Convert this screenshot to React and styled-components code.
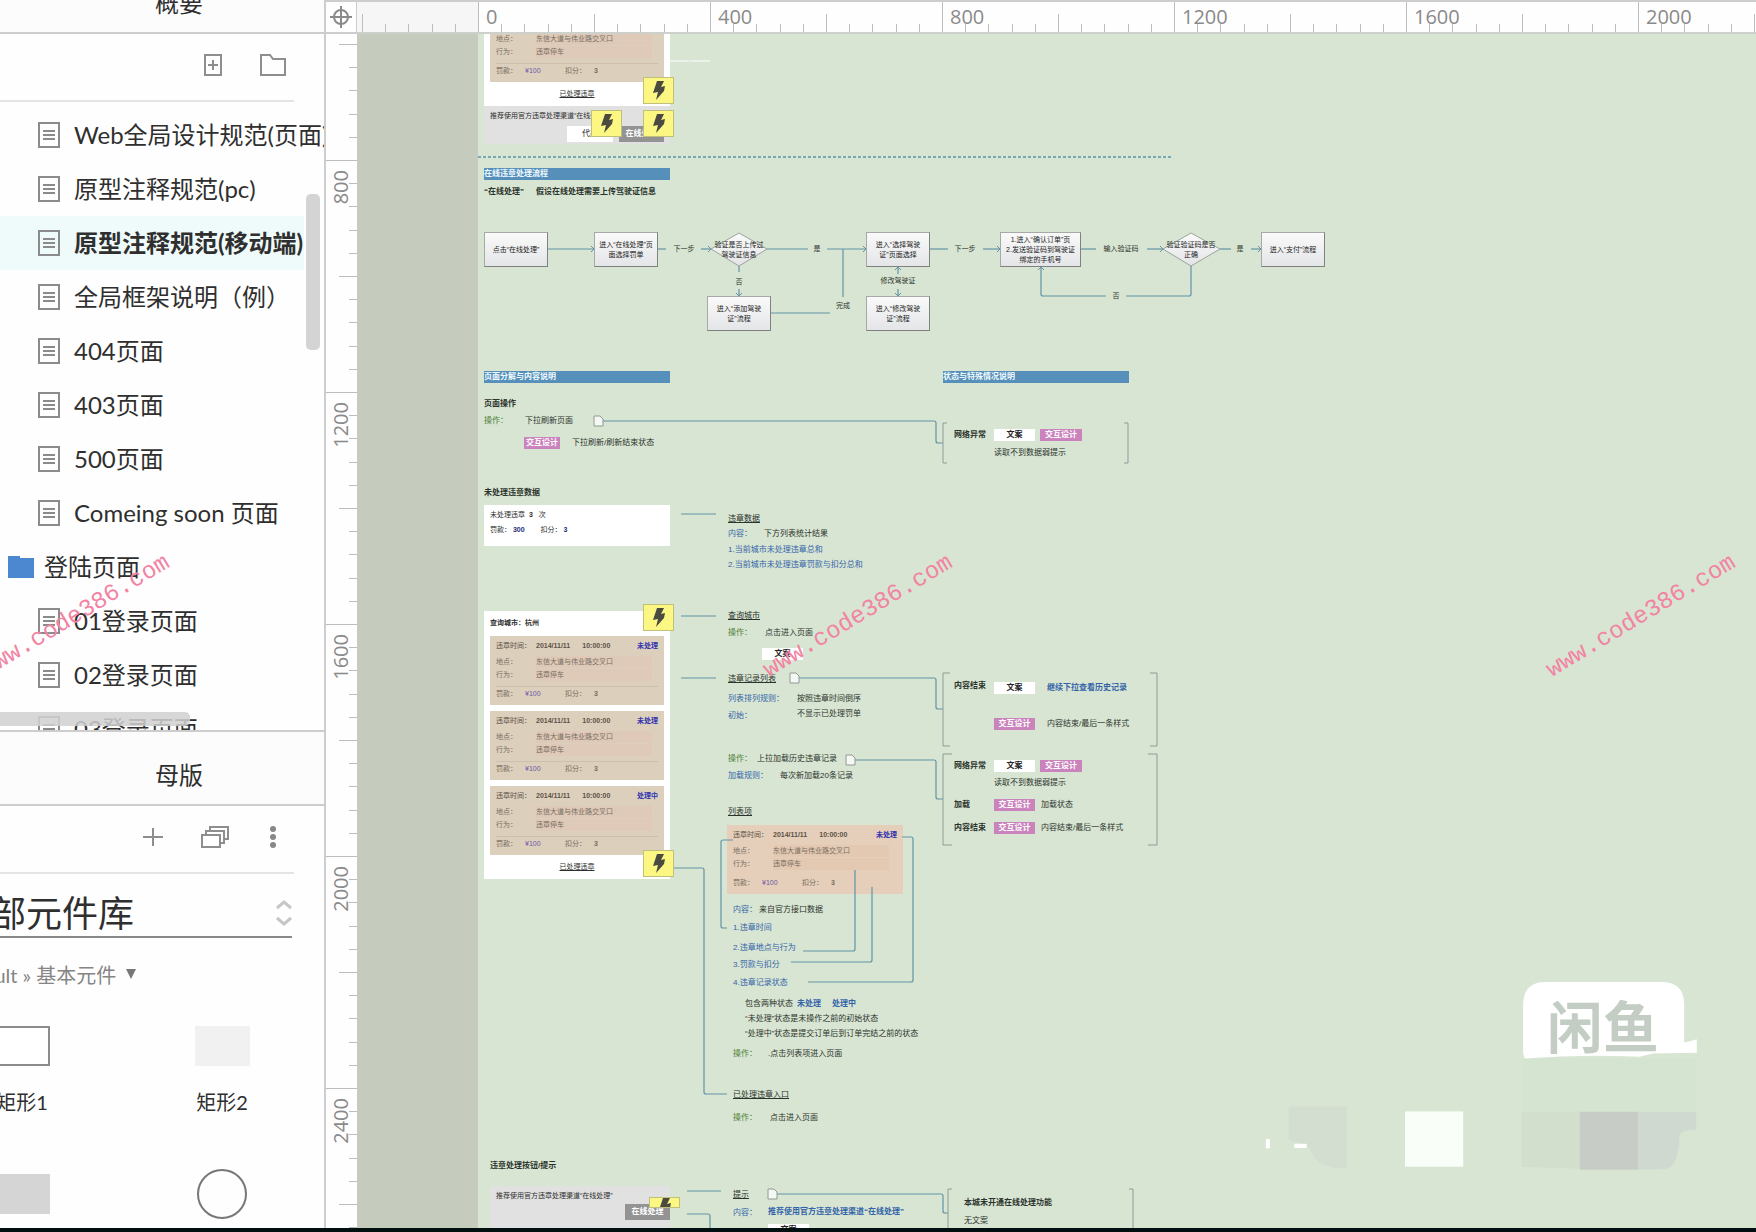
import React from "react";
import styled, { createGlobalStyle, css } from "styled-components";

const pages = [
  { name: "Web全局设计规范(页面)" },
  { name: "原型注释规范(pc)" },
  { name: "原型注释规范(移动端)", active: true },
  { name: "全局框架说明（例）" },
  { name: "404页面" },
  { name: "403页面" },
  { name: "500页面" },
  { name: "Comeing soon 页面" },
  { name: "登陆页面", folder: true },
  { name: "01登录页面" },
  { name: "02登录页面" },
  { name: "03登录页面" },
];

const notes = [
  // online handling flow
  { x: 6, y: 158, text: "“在线处理”", bold: true },
  { x: 58, y: 158, text: "假设在线处理需要上传驾驶证信息", bold: true },
  // page operations
  { x: 6, y: 370, text: "页面操作", bold: true },
  { x: 6, y: 387, text: "操作：", tone: "green" },
  { x: 47, y: 387, text: "下拉刷新页面" },
  { x: 94, y: 409, text: "下拉刷新/刷新结束状态" },
  { x: 476, y: 401, text: "网络异常", bold: true },
  { x: 516, y: 419, text: "读取不到数据弱提示" },
  // violation data
  { x: 6, y: 459, text: "未处理违章数据", bold: true },
  { x: 250, y: 485, text: "违章数据", line: true },
  { x: 250, y: 500, text: "内容：", tone: "blue" },
  { x: 286, y: 500, text: "下方列表统计结果" },
  { x: 250, y: 516, text: "1.当前城市未处理违章总和", tone: "blue" },
  { x: 250, y: 531, text: "2.当前城市未处理违章罚款与扣分总和", tone: "blue" },
  // city
  { x: 250, y: 582, text: "查询城市", line: true },
  { x: 250, y: 599, text: "操作：", tone: "green" },
  { x: 287, y: 599, text: "点击进入页面" },
  // record list
  { x: 250, y: 645, text: "违章记录列表", line: true },
  { x: 250, y: 665, text: "列表排列规则：", tone: "blue" },
  { x: 319, y: 665, text: "按照违章时间倒序" },
  { x: 250, y: 682, text: "初始：", tone: "blue" },
  { x: 319, y: 680, text: "不显示已处理罚单" },
  { x: 476, y: 652, text: "内容结束", bold: true },
  { x: 569, y: 654, text: "继续下拉查看历史记录", tone: "blue", bold: true },
  { x: 569, y: 690, text: "内容结束/最后一条样式" },
  { x: 250, y: 725, text: "操作：", tone: "green" },
  { x: 279, y: 725, text: "上拉加载历史违章记录" },
  { x: 250, y: 742, text: "加载规则：", tone: "blue" },
  { x: 302, y: 742, text: "每次新加载20条记录" },
  { x: 476, y: 732, text: "网络异常", bold: true },
  { x: 516, y: 749, text: "读取不到数据弱提示" },
  { x: 476, y: 771, text: "加载", bold: true },
  { x: 563, y: 771, text: "加载状态" },
  { x: 476, y: 794, text: "内容结束", bold: true },
  { x: 563, y: 794, text: "内容结束/最后一条样式" },
  // list item
  { x: 250, y: 778, text: "列表项", line: true },
  { x: 255, y: 876, text: "内容：", tone: "blue" },
  { x: 281, y: 876, text: "来自官方接口数据" },
  { x: 255, y: 894, text: "1.违章时间", tone: "blue" },
  { x: 255, y: 914, text: "2.违章地点与行为", tone: "blue" },
  { x: 255, y: 931, text: "3.罚款与扣分", tone: "blue" },
  { x: 255, y: 949, text: "4.违章记录状态", tone: "blue" },
  { x: 267, y: 970, text: "包含两种状态" },
  { x: 319, y: 970, text: "未处理", tone: "blue", bold: true },
  { x: 354, y: 970, text: "处理中", tone: "blue", bold: true },
  { x: 267, y: 985, text: "“未处理”状态是未操作之前的初始状态" },
  { x: 267, y: 1000, text: "“处理中”状态是提交订单后到订单完结之前的状态" },
  { x: 255, y: 1020, text: "操作：", tone: "green" },
  { x: 290, y: 1020, text: ".点击列表项进入页面" },
  { x: 255, y: 1061, text: "已处理违章入口", line: true },
  { x: 255, y: 1084, text: "操作：", tone: "green" },
  { x: 292, y: 1084, text: "点击进入页面" },
  // buttons and hints
  { x: 12, y: 1132, text: "违章处理按钮/提示", bold: true },
  { x: 255, y: 1161, text: "提示", line: true },
  { x: 255, y: 1179, text: "内容：", tone: "blue" },
  { x: 290, y: 1178, text: "推荐使用官方违章处理渠道“在线处理”", tone: "blue", bold: true },
  { x: 486, y: 1169, text: "本城未开通在线处理功能", bold: true },
  { x: 486, y: 1187, text: "无文案" },
];

const tags = [
  { x: 46, y: 403, w: 36, pink: true },
  { x: 516, y: 395, w: 41 },
  { x: 562, y: 395, w: 42, pink: true },
  { x: 284, y: 614, w: 41 },
  { x: 516, y: 648, w: 41 },
  { x: 516, y: 684, w: 41, pink: true },
  { x: 516, y: 726, w: 41 },
  { x: 562, y: 726, w: 42, pink: true },
  { x: 516, y: 765, w: 41, pink: true },
  { x: 516, y: 788, w: 41, pink: true },
  { x: 290, y: 1190, w: 41 },
];

const bars = [
  { x: 6, y: 134, text: "在线违章处理流程" },
  { x: 6, y: 337, text: "页面分解与内容说明" },
  { x: 465, y: 337, text: "状态与特殊情况说明" },
];

const nodes = [
  { x: 6, y: 198, w: 64, lines: ["点击“在线处理”"] },
  { x: 116, y: 198, w: 64, lines: ["进入“在线处理”页", "面选择罚单"] },
  { x: 229, y: 262, w: 64, lines: ["进入“添加驾驶", "证”流程"] },
  { x: 388, y: 198, w: 64, lines: ["进入“选择驾驶", "证”页面选择"] },
  { x: 388, y: 262, w: 64, lines: ["进入“修改驾驶", "证”流程"] },
  { x: 522, y: 198, w: 81, lines: ["1.进入“确认订单”页", "2.发送验证码到驾驶证", "绑定的手机号"] },
  { x: 783, y: 198, w: 64, lines: ["进入“支付”流程"] },
  { x: 229, y: 198, w: 64, plain: true, lines: ["验证是否上传过", "驾驶证信息"] },
  { x: 681, y: 198, w: 64, plain: true, lines: ["验证验证码是否", "正确"] },
];

const steps = [
  { x: 206, y: 215, text: "下一步" },
  { x: 339, y: 215, text: "是" },
  { x: 261, y: 248, text: "否" },
  { x: 365, y: 272, text: "完成" },
  { x: 420, y: 247, text: "修改驾驶证" },
  { x: 487, y: 215, text: "下一步" },
  { x: 643, y: 215, text: "输入验证码" },
  { x: 762, y: 215, text: "是" },
  { x: 638, y: 262, text: "否" },
];

const arrows = [
  "M70 215H116",
  "M223 215H233",
  "M349 215H388",
  "M261 255V262",
  "M420 240V233",
  "M420 255V262",
  "M505 215H522",
  "M669 215H685",
  "M773 215H783",
  "M628 262H565Q563 262 563 260V233",
];

const wires = [
  "M180 215H188",
  "M289 215H330",
  "M365 215V263",
  "M293 279H352",
  "M261 232V238",
  "M452 215H470",
  "M603 215H618",
  "M742 215H753",
  "M713 232V260Q713 262 711 262H648",
  "M125 387H456Q458 387 458 389V407Q458 409 460 409H465",
  "M203 480H238",
  "M203 582H238",
  "M203 644H238",
  "M321 644H456Q458 644 458 646V673Q458 675 460 675H465",
  "M377 726H456Q458 726 458 728V763Q458 765 460 765H465",
  "M255 806H245Q243 806 243 808V892Q243 894 245 894H249",
  "M424 803H433Q435 803 435 805V946Q435 948 433 948H330",
  "M377 836V915Q377 917 375 917H325",
  "M394 853V926Q394 928 392 928H313",
  "M196 834H224Q226 834 226 836V1058Q226 1060 228 1060H249",
  "M209 1157H243",
  "M298 1160H463Q465 1160 465 1162V1177Q465 1179 467 1179H470",
  "M209 1180H230Q232 1180 232 1182V1200",
];

const brackets = [
  "M469 389H465V429H469M646 389H650V429H646",
  "M472 639H465V712H472M672 639H679V712H672",
  "M474 720H465V811H474M670 720H679V811H670",
  "M474 1155H470V1200M651 1155H655V1200",
];

const sheets = [
  [116, 382],
  [312, 639],
  [368, 721],
  [290, 1155],
];

const bolts = [
  [165, 43],
  [113, 76],
  [165, 76],
  [165, 570],
  [165, 816],
];

function Ruler({ vertical, start, count }) {
  const ticks = (n, first) =>
    Array.from({ length: n }, (_, i) => <Tick key={i} $v={vertical} $kind={(i + first) % 10} />);
  return (
    <RulerStrip $v={vertical}>
      <Segment $v={vertical} $half>{ticks(5, 5)}</Segment>
      {Array.from({ length: count }, (_, i) => (
        <Segment key={i} $v={vertical}>
          {ticks(10, 0)}
          <RulerLabel $v={vertical}>{start + i * 400}</RulerLabel>
        </Segment>
      ))}
    </RulerStrip>
  );
}

function DocIcon() {
  return (
    <svg width="22" height="26" viewBox="0 0 22 26" fill="none" stroke="#8b8b8b" strokeWidth="2">
      <path d="M1 1H21V25H1ZM5 9H17M5 13H17M5 17H17" />
    </svg>
  );
}

function FolderIcon() {
  return (
    <svg width="26" height="22" viewBox="0 0 26 22">
      <path d="M0 0H12V2H26V22H0Z" fill="#4c88d0" />
    </svg>
  );
}

function Bolt({ x, y, h = 27 }) {
  return (
    <BoltBox $x={x} $y={y} $h={h}>
      <svg width="14" height="19" viewBox="0 0 14 19">
        <path d="M5 0H12L9 6L13 5L12 10L4 19L6 11L1 12Z" fill="#4a4a40" />
      </svg>
    </BoltBox>
  );
}

function Violation({ status = "未处理", warm }) {
  return (
    <Card $warm={warm}>
      <CardHead>
        <Label>违章时间：</Label>
        <b>2014/11/11</b>
        <Time>10:00:00</Time>
        <Status>{status}</Status>
      </CardHead>
      <CardRow>
        <Label>地点：</Label>
        <Value $warm={warm}>东信大道与伟业路交叉口</Value>
      </CardRow>
      <CardRow>
        <Label>行为：</Label>
        <Value $warm={warm}>违章停车</Value>
      </CardRow>
      <CardFoot $warm={warm}>
        <Fine>罚款：</Fine>
        <Price>¥100</Price>
        <Fine>扣分：</Fine>
        <b>3</b>
      </CardFoot>
    </Card>
  );
}

function Connectors() {
  return (
    <Drawing width="900" height="1200" viewBox="0 0 900 1200" fill="none">
      <defs>
        <marker
          id="arrow"
          viewBox="0 0 8 8"
          refX="6"
          refY="4"
          markerWidth="8"
          markerHeight="8"
          markerUnits="userSpaceOnUse"
          orient="auto-start-reverse"
        >
          <path d="M3 1L6 4L3 7" fill="none" stroke="#6393a6" />
        </marker>
        <linearGradient id="shade" x1="0" y1="0" x2="0" y2="1">
          <stop offset="0" stopColor="#fbfbfb" />
          <stop offset="1" stopColor="#e3e4e6" />
        </linearGradient>
      </defs>
      <path d="M191 27H233" stroke="#fff" strokeDasharray="20 1" />
      <path d="M0 123H695" stroke="#76a9b4" strokeWidth="2" strokeDasharray="3 2" />
      <path d="M261 199L289 215L261 232L233 215ZM713 199L742 215L713 232L685 215Z" fill="url(#shade)" stroke="#9aa39c" />
      {wires.map((d) => <path key={d} d={d} stroke="#6393a6" strokeWidth="1.2" />)}
      {arrows.map((d) => <path key={d} d={d} stroke="#6393a6" strokeWidth="1.2" markerEnd="url(#arrow)" />)}
      {brackets.map((d) => <path key={d} d={d} stroke="#8a9d98" />)}
      {sheets.map(([x, y]) => (
        <path key={y} d={`M${x} ${y}H${x + 6}L${x + 9} ${y + 3}V${y + 10}H${x}Z`} fill="#f4f7f3" stroke="#8f9a93" />
      ))}
    </Drawing>
  );
}

function Stamp() {
  return (
    <StampBox viewBox="60 90 1330 580" width="443" height="193">
      <rect x="850" y="326" width="520" height="160" fill="#d4e4d1" />
      <path d="M145 470H320V655H290Q235 650 215 610L205 590L145 570Z" fill="#d3ddd0" />
      <rect x="495" y="485" width="175" height="166" fill="#f9fff8" />
      <path d="M845 486H1020V657L845 652Z" fill="#d2dfcd" />
      <rect x="1020" y="486" width="175" height="174" fill="#c7ccc6" />
      <path d="M1195 486H1370V540Q1322 540 1320 560Q1318 658 1270 659L1195 660Z" fill="#d0d9d0" />
      <rect x="77" y="568" width="12" height="28" fill="#fff" />
      <rect x="162" y="582" width="38" height="13" rx="4" fill="#fff" />
      <path d="M850 160Q852 98 915 96H1270Q1332 98 1334 160V278Q1355 274 1372 268V309L1240 311L1200 321Q1030 312 855 326L850 310Z" fill="#fff" />
      <text x="922" y="294" fill="#c3cdc3" fontSize="168" fontWeight="700" fontFamily="'Noto Sans CJK SC', sans-serif">闲鱼</text>
    </StampBox>
  );
}

function Sidebar() {
  return (
    <Side>
      <TabBar>
        <TabOn aria-label="页面" />
        <Tab>概要</Tab>
      </TabBar>
      <Tools>
        <IconButton aria-label="新增页面">
          <svg width="18" height="22" viewBox="0 0 18 22" fill="none" stroke="#8e8e8e" strokeWidth="2">
            <path d="M1 1H17V21H1ZM9 6V16M4 11H14" />
          </svg>
        </IconButton>
        <IconButton aria-label="新增文件夹">
          <svg width="26" height="22" viewBox="0 0 26 22" fill="none" stroke="#8e8e8e" strokeWidth="2">
            <path d="M1 1H10L13 5H25V21H1Z" />
          </svg>
        </IconButton>
      </Tools>
      <PageList>
        {pages.map((p) => (
          <PageLink href="#" key={p.name} $active={p.active} $folder={p.folder}>
            {p.folder ? <FolderIcon /> : <DocIcon />}
            <span>{p.name}</span>
          </PageLink>
        ))}
        <ThumbY />
        <ThumbX />
      </PageList>
      <TabBar $full>
        <TabOn aria-label="元件库" />
        <Tab>母版</Tab>
      </TabBar>
      <Tools $wide>
        <IconButton aria-label="添加">
          <svg width="20" height="20" viewBox="0 0 20 20" stroke="#8e8e8e" strokeWidth="2">
            <path d="M10 1V19M0 10H20" />
          </svg>
        </IconButton>
        <IconButton aria-label="元件库列表">
          <svg width="28" height="22" viewBox="0 0 28 22" fill="#fff" stroke="#8e8e8e" strokeWidth="2">
            <path d="M9 1H27V13H9Z" />
            <path d="M5 5H23V17H5Z" />
            <path d="M1 9H19V21H1Z" />
          </svg>
        </IconButton>
        <IconButton aria-label="更多">
          <svg width="12" height="22" viewBox="0 0 12 22" fill="#888">
            <circle cx="6" cy="3" r="3" />
            <circle cx="6" cy="11" r="3" />
            <circle cx="6" cy="19" r="3" />
          </svg>
        </IconButton>
      </Tools>
      <Library>
        <Picker>
          <LibrarySelect aria-label="元件库">
            <option>全部元件库</option>
          </LibrarySelect>
          <svg width="16" height="26" viewBox="0 0 16 26" fill="none" stroke="#c6c6c6" strokeWidth="3">
            <path d="M1 8L8 2L15 8M1 18L8 24L15 18" />
          </svg>
        </Picker>
        <Crumb>
          Default » 基本元件
          <svg width="10" height="10" viewBox="0 0 10 10">
            <path d="M0 0H10L5 10Z" fill="#777" />
          </svg>
        </Crumb>
        <Widgets>
          <Widget><Shape $border="2px solid #8c8c8c" />矩形1</Widget>
          <Widget><Shape $fill="#f1f1f1" />矩形2</Widget>
          <Widget><Shape $fill="#d5d5d5" /></Widget>
          <Widget><Circle /></Widget>
        </Widgets>
      </Library>
    </Side>
  );
}

function Board() {
  return (
    <Sheet>
      <Phone $x={6} $y={-21}>
        <Violation />
        <PhoneLink href="#">已处理违章</PhoneLink>
      </Phone>
      <Tip $x={6} $y={72} $w={186} $h={38}>
        推荐使用官方违章处理渠道“在线处理”
        <TipActions>
          <TipButton $w={46}>代办</TipButton>
          <TipButton $w={45} $dark>在线处理</TipButton>
        </TipActions>
      </Tip>

      <Stats>
        <p>未处理违章 &nbsp;<b>3</b> &nbsp; 次</p>
        <p>罚款： <strong>300</strong> <span>扣分： </span><strong>3</strong></p>
      </Stats>

      <Phone $x={6} $y={577}>
        <City>查询城市：杭州</City>
        <Violation />
        <Violation />
        <Violation status="处理中" />
        <PhoneLink href="#">已处理违章</PhoneLink>
      </Phone>

      <Sample>
        <Violation warm />
      </Sample>

      <Tip $x={12} $y={1152} $w={180} $h={44}>
        推荐使用官方违章处理渠道“在线处理”
        <TipActions $end>
          <TipButton $w={45} $dark>在线处理</TipButton>
        </TipActions>
      </Tip>

      {bars.map((b) => <Bar key={b.text} $x={b.x} $y={b.y}>{b.text}</Bar>)}
      {nodes.filter((n) => !n.plain).map((n) => (
        <Node key={n.lines[0] + n.x} $x={n.x} $y={n.y} $w={n.w}>
          {n.lines.map((l) => <span key={l}>{l}</span>)}
        </Node>
      ))}
      <Connectors />
      {nodes.filter((n) => n.plain).map((n) => (
        <Node key={n.x} $x={n.x} $y={n.y} $w={n.w} $plain>
          {n.lines.map((l) => <span key={l}>{l}</span>)}
        </Node>
      ))}
      {steps.map((s) => <Step key={s.x + s.text} $x={s.x} $y={s.y}>{s.text}</Step>)}
      {tags.map((t) => (
        <Tag key={`${t.x}-${t.y}`} $x={t.x} $y={t.y} $w={t.w} $pink={t.pink}>
          {t.pink ? "交互设计" : "文案"}
        </Tag>
      ))}
      {notes.map((n) => (
        <Note key={`${n.x}-${n.y}`} $x={n.x} $y={n.y} $tone={n.tone} $bold={n.bold} $line={n.line}>
          {n.text}
        </Note>
      ))}
      {bolts.map(([x, y]) => <Bolt key={`${x}-${y}`} x={x} y={y} />)}
      <Bolt x={171} y={1163} h={11} />
      <Stamp />
    </Sheet>
  );
}

export default function App() {
  return (
    <Screen>
      <GlobalStyle />
      <Main>
        <Sidebar />
        <Workspace>
          <Corner>
            <svg width="22" height="22" viewBox="0 0 22 22" fill="none" stroke="#8a8a8a" strokeWidth="2">
              <circle cx="11" cy="11" r="7" />
              <path d="M11 0V22M0 11H22" />
            </svg>
          </Corner>
          <Ruler start={0} count={6} />
          <Ruler vertical start={800} count={5} />
          <Canvas>
            <Board />
          </Canvas>
        </Workspace>
      </Main>
      <Footer />
      <Mark $x={-33}>www.code386.com</Mark>
      <Mark $x={750}>www.code386.com</Mark>
      <Mark $x={1533}>www.code386.com</Mark>
    </Screen>
  );
}

const GlobalStyle = createGlobalStyle`
  * {
    box-sizing: border-box;
  }
  body {
    margin: 0;
    font-family: Lato, "Noto Sans CJK SC", sans-serif;
    color: #2f2f2f;
  }
  p {
    margin: 0;
  }
  button, select {
    font: inherit;
    color: inherit;
    border: 0;
    padding: 0;
    background: none;
  }
  a {
    color: inherit;
  }
`;

const Screen = styled.div`
  position: relative;
  display: flex;
  flex-direction: column;
  height: 100vh;
  overflow: hidden;
`;

const Main = styled.div`
  flex: 1;
  min-height: 0;
  display: flex;
`;

const Footer = styled.div`
  height: 4px;
  background: #020f10;
`;

/* sidebar */

const Side = styled.aside`
  width: 326px;
  flex-shrink: 0;
  display: flex;
  flex-direction: column;
  overflow: hidden;
  background: #fefefe;
  border-right: 2px solid #cdcdcd;
`;

const TabBar = styled.div`
  display: flex;
  align-items: flex-end;
  flex-shrink: 0;
  height: ${(p) => (p.$full ? "76px" : "34px")};
  overflow: hidden;
  background: #fcfcfc;
  border-bottom: 2px solid #cdcdcd;
  ${(p) => p.$full && "border-top: 2px solid #cdcdcd;"}
`;

const TabOn = styled.button`
  width: 2px;
  height: 6px;
  background: #4a7cb0;
`;

const Tab = styled.button`
  flex: 0 0 358px;
  height: 72px;
  padding-top: 14px;
  font-size: 24px;
  line-height: 36px;
`;

const Tools = styled.div`
  display: flex;
  align-items: center;
  justify-content: flex-end;
  gap: 38px;
  flex-shrink: 0;
  height: 68px;
  margin-right: 30px;
  padding-right: ${(p) => (p.$wide ? "15px" : "8px")};
  padding-bottom: 4px;
  border-bottom: 2px solid #e4e4e4;
`;

const IconButton = styled.button`
  display: flex;
`;

const PageList = styled.nav`
  position: relative;
  flex-shrink: 0;
  height: 628px;
  padding-top: 6px;
  overflow: hidden;
`;

const PageLink = styled.a`
  display: flex;
  align-items: center;
  gap: ${(p) => (p.$folder ? "10px" : "14px")};
  height: 54px;
  margin-right: 20px;
  padding-left: ${(p) => (p.$folder ? "8px" : "38px")};
  font-size: 24px;
  font-weight: ${(p) => (p.$active ? 700 : 400)};
  white-space: pre;
  text-decoration: none;
  background: ${(p) => (p.$active ? "#effafa" : "none")};

  svg {
    flex-shrink: 0;
  }
  span {
    padding-bottom: 3px;
  }
`;

const ThumbY = styled.div`
  position: absolute;
  right: 4px;
  top: 92px;
  width: 14px;
  height: 156px;
  border-radius: 5px;
  background: rgba(205, 205, 205, 0.85);
`;

const ThumbX = styled.div`
  position: absolute;
  left: 0;
  bottom: 4px;
  width: 190px;
  height: 14px;
  border-radius: 0 5px 5px 0;
  background: rgba(208, 208, 208, 0.85);
`;

const Library = styled.div`
  flex-shrink: 0;
  margin-left: -78px;
`;

const Picker = styled.label`
  display: flex;
  align-items: center;
  justify-content: space-between;
  height: 64px;
  margin: 0 32px;
  padding-top: 16px;
  border-bottom: 2px solid #888;
`;

const LibrarySelect = styled.select`
  appearance: none;
  flex: 1;
  height: 46px;
  font-size: 36px;
  line-height: 46px;
`;

const Crumb = styled.button`
  display: flex;
  align-items: center;
  gap: 10px;
  height: 76px;
  padding: 0 0 4px 30px;
  font-size: 20px;
  color: #858585;
  white-space: pre;
`;

const Widgets = styled.div`
  display: grid;
  grid-template-columns: 200px 200px;
  padding-top: 12px;
`;

const Widget = styled.div`
  display: flex;
  flex-direction: column;
  align-items: center;
  gap: 20px;
  height: 148px;
  font-size: 20px;
  line-height: 32px;
`;

const Shape = styled.div`
  width: 55px;
  height: 40px;
  flex-shrink: 0;
  border: ${(p) => p.$border || "0"};
  background: ${(p) => p.$fill || "#fff"};
`;

const Circle = styled.div`
  width: 50px;
  height: 50px;
  flex-shrink: 0;
  margin-top: -5px;
  border: 2px solid #777;
  border-radius: 50%;
`;

/* rulers */

const Workspace = styled.div`
  flex: 1;
  min-width: 0;
  display: grid;
  grid-template-columns: 31px 1fr;
  grid-template-rows: 34px 1fr;
  overflow: hidden;
`;

const Corner = styled.div`
  display: flex;
  align-items: center;
  justify-content: center;
  background: #fefefe;
  border: solid #cdcdcd;
  border-width: 2px 1px 2px 0;
`;

const RulerStrip = styled.div`
  display: flex;
  overflow: hidden;
  min-width: 0;
  min-height: 0;
  background: #fefefe;
  ${(p) =>
    p.$v
      ? css`
          flex-direction: column;
          padding-top: 10px;
        `
      : css`
          padding-left: 5px;
          border-top: 2px solid #cdcdcd;
          border-bottom: 2px solid #cdd0cb;
          background: linear-gradient(90deg, #f6f6f6 121px, #fefefe 121px);
        `}
`;

const Segment = styled.div`
  position: relative;
  display: flex;
  flex-direction: ${(p) => (p.$v ? "column" : "row")};
  align-items: flex-end;
  flex: 0 0 ${(p) => (p.$half ? "116px" : "232px")};
`;

const size = (kind, small) => (kind === 0 ? "100%" : kind === 5 ? "18px" : small);

const Tick = styled.i`
  flex: 1;
  ${(p) =>
    p.$v
      ? css`
          width: ${size(p.$kind, "8px")};
          border-top: 1px solid #bdbdbd;
        `
      : css`
          height: ${size(p.$kind, "8px")};
          border-left: 1px solid #bdbdbd;
        `}
`;

const RulerLabel = styled.span`
  position: absolute;
  font-family: "Open Sans", sans-serif;
  font-size: 20px;
  line-height: 28px;
  color: #8a8a8a;
  ${(p) =>
    p.$v
      ? css`
          top: 10px;
          left: 1px;
          writing-mode: vertical-rl;
          transform: rotate(180deg);
        `
      : css`
          top: 1px;
          left: 8px;
        `}
`;

/* canvas */

const Canvas = styled.main`
  display: flex;
  min-width: 0;
  min-height: 0;
  padding-left: 121px;
  overflow: hidden;
  background: #c5ccbd;
`;

const Sheet = styled.div`
  position: relative;
  flex: 1;
  overflow: hidden;
  background: #d8e5d3;
  font-family: "Liberation Sans", "Noto Sans CJK SC", sans-serif;
  font-size: 8px;
  line-height: 12px;
`;

const placed = css`
  position: absolute;
  left: ${(p) => p.$x}px;
  top: ${(p) => p.$y}px;
`;

const tones = { green: "#4f8037", blue: "#3464a8" };

const Note = styled.div`
  ${placed}
  margin-top: -6px;
  color: ${(p) => tones[p.$tone] || "#2c332c"};
  font-weight: ${(p) => (p.$bold ? 700 : 400)};
  text-decoration: ${(p) => (p.$line ? "underline" : "none")};
  white-space: pre;
`;

const Bar = styled.h2`
  ${placed}
  width: 186px;
  margin: 0;
  font-size: 8px;
  color: #f0faff;
  background: #5690ba;
`;

const Tag = styled.span`
  ${placed}
  width: ${(p) => p.$w}px;
  text-align: center;
  font-weight: 700;
  color: ${(p) => (p.$pink ? "#fff" : "#222")};
  background: ${(p) => (p.$pink ? "#cb83bd" : "#fff")};
`;

const Node = styled.div`
  ${placed}
  display: flex;
  flex-direction: column;
  align-items: center;
  justify-content: center;
  width: ${(p) => p.$w}px;
  height: 35px;
  font-size: 7px;
  line-height: 10px;
  white-space: nowrap;
  color: #222;
  ${(p) =>
    !p.$plain &&
    css`
      border: 1px solid #a5aaa6;
      border-right-color: #7f8280;
      border-bottom-color: #7f8280;
      background: linear-gradient(#fafafa, #e4e5e8);
    `}
`;

const Step = styled.span`
  ${placed}
  transform: translate(-50%, -50%);
  font-size: 7px;
  white-space: nowrap;
  color: #2c332c;
`;

const Drawing = styled.svg`
  position: absolute;
  left: 0;
  top: 0;
`;

const StampBox = styled.svg`
  position: absolute;
  left: 782px;
  top: 946px;
`;

const BoltBox = styled.div`
  ${placed}
  display: flex;
  justify-content: center;
  width: 31px;
  height: ${(p) => p.$h}px;
  padding-top: ${(p) => (p.$h < 20 ? "0" : "3px")};
  overflow: hidden;
  background: #fcf783;
  border: 1px solid #bfc07c;
`;

const Phone = styled.div`
  ${placed}
  display: flex;
  flex-direction: column;
  gap: 6px;
  width: 186px;
  padding: 0 6px;
  background: #fff;
  font-size: 7px;
`;

const City = styled.div`
  height: 19px;
  padding-top: 6px;
  font-weight: 700;
`;

const PhoneLink = styled.a`
  height: 18px;
  text-align: center;
`;

const Card = styled.div`
  height: 69px;
  flex-shrink: 0;
  padding: 4px 6px 0;
  font-size: 7px;
  color: #776d60;
  background: ${(p) => (p.$warm ? "#e5cfba" : "#dccfbc")};
`;

const CardRow = styled.div`
  display: flex;
  margin-bottom: 1px;
`;

const CardHead = styled(CardRow)`
  margin-bottom: 4px;
  color: #5c5247;
`;

const CardFoot = styled(CardRow)`
  margin: 5px 0 0;
  padding-top: 1px;
  border-top: 1px solid ${(p) => (p.$warm ? "#e5cfba" : "#cdbfae")};
`;

const Label = styled.span`
  width: 40px;
  white-space: nowrap;
`;

const Value = styled.span`
  width: 116px;
  background: ${(p) => (p.$warm ? "#e3c8b2" : "#dfc9b8")};
`;

const Time = styled.b`
  margin-left: 12px;
`;

const Status = styled.b`
  margin-left: auto;
  color: #3335b0;
`;

const Fine = styled.span`
  width: 29px;
`;

const Price = styled.span`
  width: 40px;
  color: #7259a8;
`;

const Sample = styled.div`
  position: absolute;
  left: 249px;
  top: 791px;
  width: 176px;
`;

const Stats = styled.div`
  position: absolute;
  left: 6px;
  top: 471px;
  display: flex;
  flex-direction: column;
  gap: 3px;
  width: 186px;
  height: 41px;
  padding: 4px 6px;
  background: #fff;
  font-size: 7px;

  strong {
    color: #1b2f78;
  }
  span {
    margin-left: 14px;
  }
`;

const Tip = styled.div`
  ${placed}
  width: ${(p) => p.$w}px;
  height: ${(p) => p.$h}px;
  padding: 4px 0 0 6px;
  background: #e0e1e0;
  font-size: 7px;
`;

const TipActions = styled.div`
  display: flex;
  justify-content: flex-end;
  gap: 6px;
  margin-top: ${(p) => (p.$end ? "2px" : "4px")};
  padding-right: ${(p) => (p.$end ? "0" : "6px")};
`;

const TipButton = styled.button`
  width: ${(p) => p.$w}px;
  height: 16px;
  color: ${(p) => (p.$dark ? "#fff" : "#222")};
  background: ${(p) => (p.$dark ? "#929392" : "#fff")};
  font-size: 8px;
  font-weight: ${(p) => (p.$dark ? 700 : 400)};
`;

const Mark = styled.div`
  position: absolute;
  left: ${(p) => p.$x}px;
  top: 600px;
  width: 218px;
  font-family: "Liberation Mono", monospace;
  font-size: 24px;
  line-height: 32px;
  white-space: nowrap;
  color: #f283a3;
  transform: rotate(-31deg);
  pointer-events: none;
`;
